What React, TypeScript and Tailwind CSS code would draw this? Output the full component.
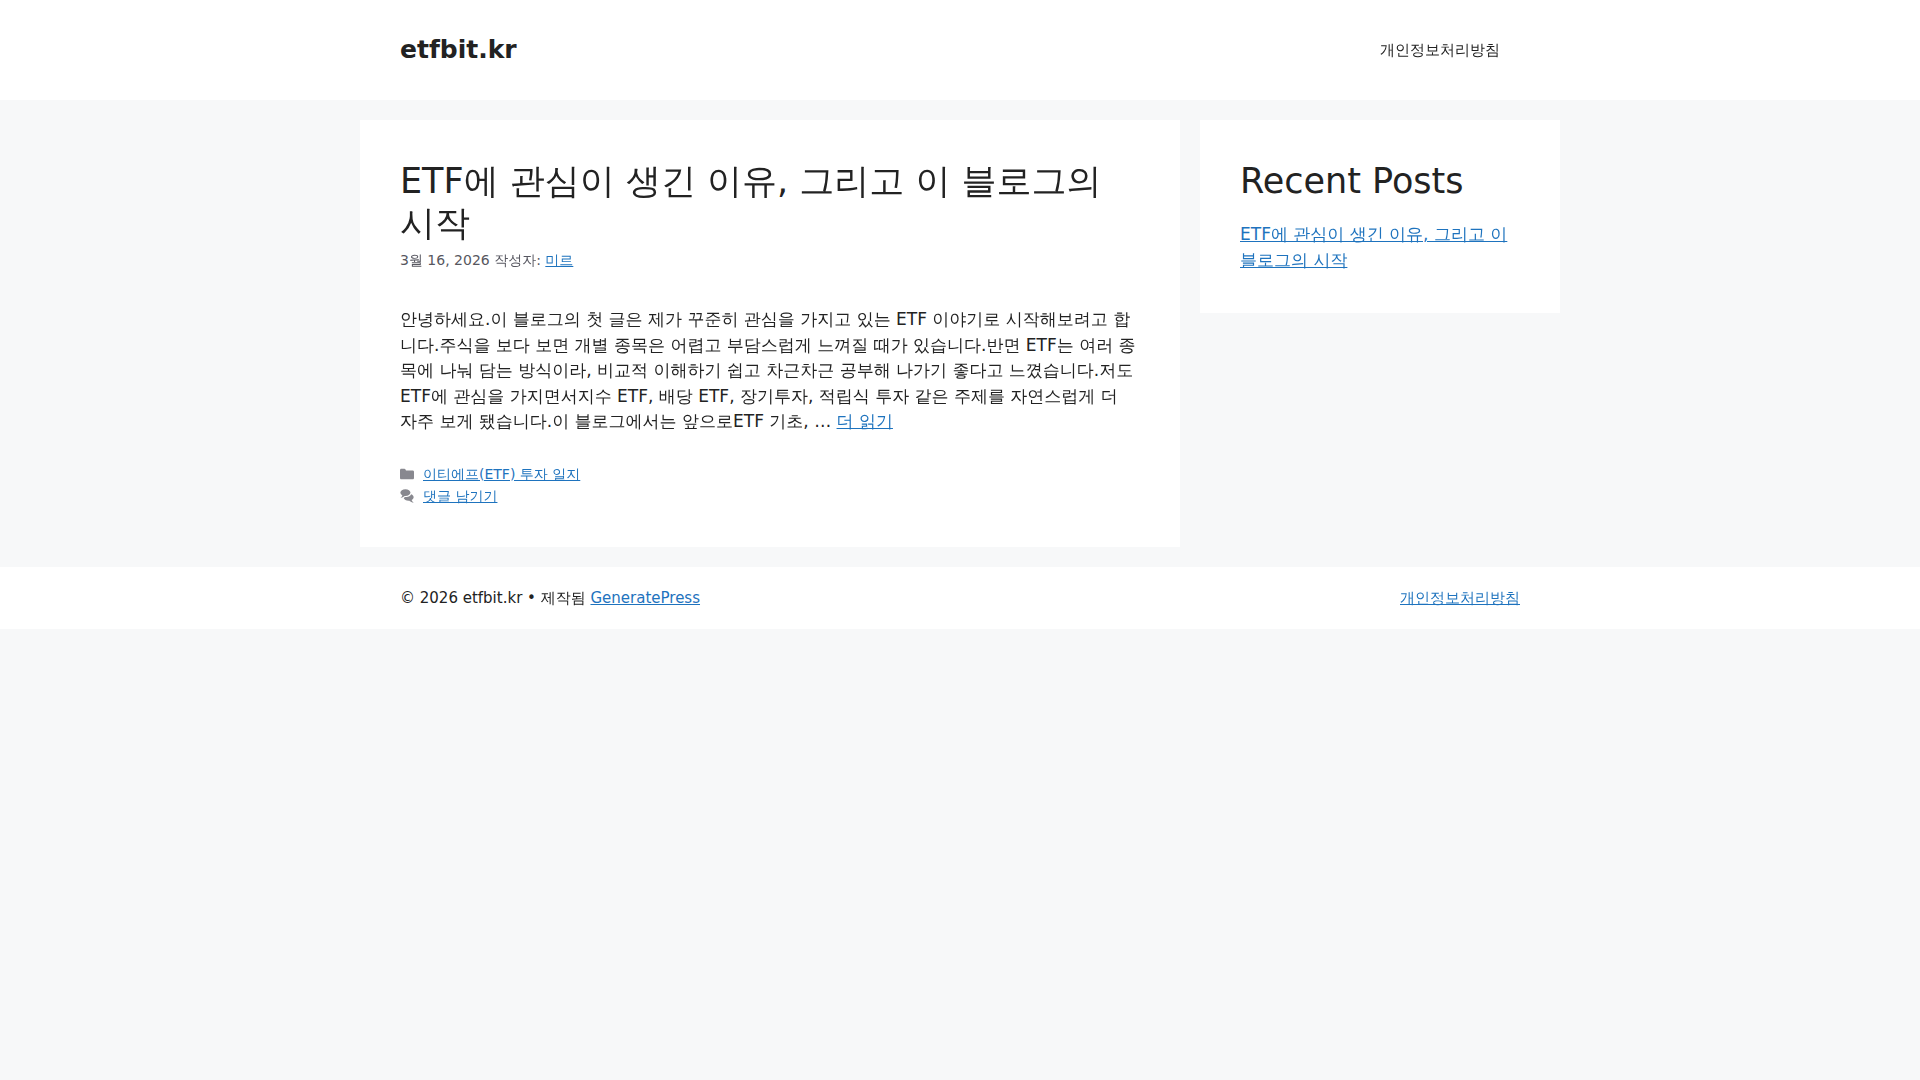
import React from "react";

const link = "text-[#1e73be] underline hover:text-black";

function Header() {
  return (
    <header className="bg-white">
      <div className="mx-auto flex max-w-[1200px] items-center justify-between px-10 py-5">
        <p className="text-[25px] leading-[60px] font-bold">
          <a href="#home">etfbit.kr</a>
        </p>
        <nav>
          <a href="#privacy" className="block px-5 text-[15px] leading-[60px]">
            개인정보처리방침
          </a>
        </nav>
      </div>
    </header>
  );
}

function FolderIcon() {
  return (
    <svg viewBox="0 0 512 512" fill="currentColor" aria-hidden="true" className="h-[14px] w-[14px]">
      <path d="M0 112c0-26.51 21.49-48 48-48h110.014a48 48 0 0 1 43.592 27.907l12.349 26.791A16 16 0 0 0 228.486 128H464c26.51 0 48 21.49 48 48v224c0 26.51-21.49 48-48 48H48c-26.51 0-48-21.49-48-48V112z" />
    </svg>
  );
}

function CommentsIcon() {
  return (
    <svg viewBox="0 0 512 512" fill="currentColor" aria-hidden="true" className="h-[14px] w-[14px]">
      <path d="M132.838 329.973a435.298 435.298 0 0 0 16.769-9.004c13.363-7.574 26.587-16.142 37.419-25.507 7.544.597 15.27.925 23.098.925 54.905 0 105.634-15.311 143.285-41.28 23.728-16.365 43.115-37.692 54.155-62.645 54.739 22.205 91.498 63.272 91.498 110.286 0 42.186-29.558 79.498-75.09 102.828 23.46 49.216 75.09 101.709 75.09 101.709s-115.837-38.35-154.424-78.46c-9.956 1.12-20.297 1.758-30.793 1.758-88.727 0-162.927-43.071-181.007-100.61z" />
      <path d="M383.371 132.502c0 70.603-82.961 127.787-185.216 127.787-10.496 0-20.837-.639-30.793-1.757-38.587 40.093-154.424 78.429-154.424 78.429s51.63-52.472 75.09-101.67c-45.532-23.321-75.09-60.619-75.09-102.79C12.938 61.9 95.9 4.716 198.155 4.716 300.41 4.715 383.37 61.9 383.37 132.502z" />
    </svg>
  );
}

function Post() {
  return (
    <article className="bg-white p-10">
      <h2 className="text-[35px] leading-[42px]">
        <a href="#post">ETF에 관심이 생긴 이유, 그리고 이 블로그의 시작</a>
      </h2>
      <div className="mt-[5px] text-[14px] leading-[22px] text-[#575760]">
        3월 16, 2026 작성자:{" "}
        <a href="#author" className={link}>
          미르
        </a>
      </div>
      <p className="mt-9 text-[17px] leading-normal">
        안녕하세요.이 블로그의 첫 글은 제가 꾸준히 관심을 가지고 있는 ETF 이야기로 시작해보려고 합니다.주식을 보다 보면 개별 종목은 어렵고 부담스럽게
        느껴질 때가 있습니다.반면 ETF는 여러 종목에 나눠 담는 방식이라, 비교적 이해하기 쉽고 차근차근 공부해 나가기 좋다고 느꼈습니다.저도 ETF에 관심을
        가지면서지수 ETF, 배당 ETF, 장기투자, 적립식 투자 같은 주제를 자연스럽게 더 자주 보게 됐습니다.이 블로그에서는 앞으로ETF 기초, …{" "}
        <a href="#more" className={link}>
          더 읽기
        </a>
      </p>
      <footer className="mt-7 text-[14px] leading-[22px] text-[#575760]">
        <div className="flex items-center gap-[9px]">
          <span className="opacity-70">
            <FolderIcon />
          </span>
          <a href="#category" className={link}>
            이티에프(ETF) 투자 일지
          </a>
        </div>
        <div className="flex items-center gap-[9px]">
          <span className="opacity-70">
            <CommentsIcon />
          </span>
          <a href="#comments" className={link}>
            댓글 남기기
          </a>
        </div>
      </footer>
    </article>
  );
}

function Sidebar() {
  return (
    <aside className="bg-white p-10">
      <h2 className="text-[35px] leading-[42px]">Recent Posts</h2>
      <ul className="mt-5 text-[17px] leading-normal">
        <li>
          <a href="#post" className={link}>
            ETF에 관심이 생긴 이유, 그리고 이 블로그의 시작
          </a>
        </li>
      </ul>
    </aside>
  );
}

export default function App() {
  return (
    <div className="min-h-screen bg-[#f7f8f9] font-['DejaVu_Sans','WenQuanYi_Zen_Hei',sans-serif] text-[#222222]">
      <Header />
      <div className="mx-auto grid max-w-[1200px] grid-cols-[1fr_360px] items-start gap-5 py-5">
        <main>
          <Post />
        </main>
        <Sidebar />
      </div>
      <footer className="bg-white">
        <div className="mx-auto flex max-w-[1200px] items-center justify-between px-10 py-5 text-[15px] leading-normal">
          <div>
            © 2026 etfbit.kr • 제작됨{" "}
            <a href="#generatepress" className={link}>
              GeneratePress
            </a>
          </div>
          <a href="#privacy" className={link}>
            개인정보처리방침
          </a>
        </div>
      </footer>
    </div>
  );
}
